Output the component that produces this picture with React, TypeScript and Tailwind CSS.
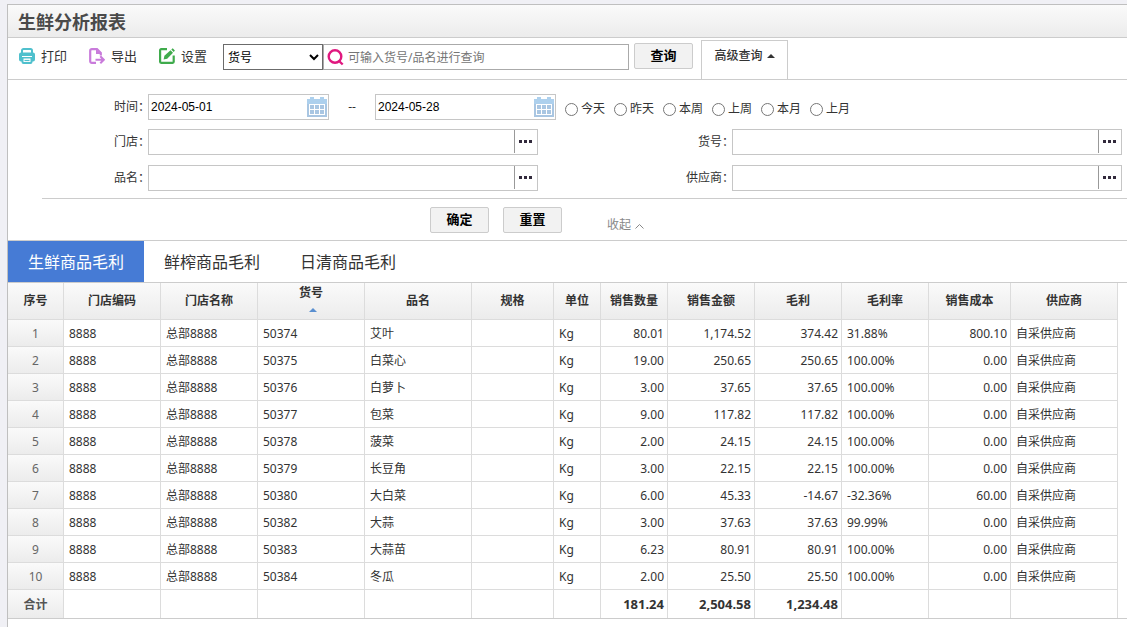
import React from "react";

type Row = {
  code: string;
  name: string;
  qty: string;
  amount: string;
  profit: string;
  rate: string;
  cost: string;
};

const rows: Row[] = [
  { code: "50374", name: "艾叶", qty: "80.01", amount: "1,174.52", profit: "374.42", rate: "31.88%", cost: "800.10" },
  { code: "50375", name: "白菜心", qty: "19.00", amount: "250.65", profit: "250.65", rate: "100.00%", cost: "0.00" },
  { code: "50376", name: "白萝卜", qty: "3.00", amount: "37.65", profit: "37.65", rate: "100.00%", cost: "0.00" },
  { code: "50377", name: "包菜", qty: "9.00", amount: "117.82", profit: "117.82", rate: "100.00%", cost: "0.00" },
  { code: "50378", name: "菠菜", qty: "2.00", amount: "24.15", profit: "24.15", rate: "100.00%", cost: "0.00" },
  { code: "50379", name: "长豆角", qty: "3.00", amount: "22.15", profit: "22.15", rate: "100.00%", cost: "0.00" },
  { code: "50380", name: "大白菜", qty: "6.00", amount: "45.33", profit: "-14.67", rate: "-32.36%", cost: "60.00" },
  { code: "50382", name: "大蒜", qty: "3.00", amount: "37.63", profit: "37.63", rate: "99.99%", cost: "0.00" },
  { code: "50383", name: "大蒜苗", qty: "6.23", amount: "80.91", profit: "80.91", rate: "100.00%", cost: "0.00" },
  { code: "50384", name: "冬瓜", qty: "2.00", amount: "25.50", profit: "25.50", rate: "100.00%", cost: "0.00" },
];

const columns = [
  { title: "序号", width: "w-[56px]" },
  { title: "门店编码", width: "w-[97px]" },
  { title: "门店名称", width: "w-[97px]" },
  { title: "货号", width: "w-[107px]", sorted: true },
  { title: "品名", width: "w-[107px]" },
  { title: "规格", width: "w-[82px]" },
  { title: "单位", width: "w-[47px]" },
  { title: "销售数量", width: "w-[67px]" },
  { title: "销售金额", width: "w-[87px]" },
  { title: "毛利", width: "w-[87px]" },
  { title: "毛利率", width: "w-[87px]" },
  { title: "销售成本", width: "w-[82px]" },
  { title: "供应商", width: "w-[107px]" },
];

const ranges = ["今天", "昨天", "本周", "上周", "本月", "上月"];

function PrintIcon() {
  return (
    <svg className="size-4" viewBox="0 0 16 16" fill="none" aria-hidden="true">
      <path d="M3 5V2.500A1.500 1.500 0 0 1 4.500 1h7A1.500 1.500 0 0 1 13 2.500V5" stroke="#4fc0cd" strokeWidth="2" />
      <path d="M2 4.500h12a2 2 0 0 1 2 2v5a2 2 0 0 1-2 2H2a2 2 0 0 1-2-2v-5a2 2 0 0 1 2-2z" fill="#4fc0cd" />
      <path d="M3.500 9.500h9V14a1 1 0 0 1-1 1h-7a1 1 0 0 1-1-1z" fill="#fff" stroke="#4fc0cd" strokeWidth="2" />
      <path d="M3 8.500h10" stroke="#fff" strokeWidth="1" />
      <path d="M5.500 12.500h5" stroke="#4fc0cd" strokeWidth="1.200" />
    </svg>
  );
}

function ExportIcon() {
  return (
    <svg className="size-4" viewBox="0 0 16 16" fill="none" stroke="#c97bdb" strokeWidth="2.200" aria-hidden="true">
      <path d="M7 14.900H2.800A1.600 1.600 0 0 1 1.200 13.300V2.700A1.600 1.600 0 0 1 2.800 1.100H8L11.800 5v2.500" />
      <path d="M7 1v5h5z" fill="#c97bdb" stroke="none" />
      <path d="M6.500 11.800h8M11.300 8.300l3.500 3.500-3.500 3.500" strokeWidth="2" />
    </svg>
  );
}

function EditIcon() {
  return (
    <svg className="size-4" viewBox="0 0 16 16" fill="none" stroke="#3fab4c" strokeWidth="2.200" aria-hidden="true">
      <path d="M8 1.200H2.100a1 1 0 0 0-1 1v11.600a1 1 0 0 0 1 1h11.600a1 1 0 0 0 1-1V7.500" />
      <path d="M4.600 11.500l.8-3.700L11.500 2.200l2.500 2.500L8.200 10.700z" fill="#3fab4c" stroke="none" />
      <path d="M12.300 1.500L13.700.3 15.900 2.500l-1.200 1.400z" fill="#3fab4c" stroke="none" />
    </svg>
  );
}

function CalendarIcon() {
  return (
    <svg className="h-5 w-5" viewBox="0 0 20 20" aria-hidden="true">
      <path d="M0 2h3V0h4v2h6V0h4v2h3v18H0z" fill="#add0ed" />
      <path d="M0 7h20v13H0z" fill="#a9c6e2" />
      <path d="M2 7h16v11H2z" fill="#fff" />
      <path
        d="M3 8h4v4H3zM8 8h4v4H8zM13 8h4v4h-4zM3 13h4v4H3zM8 13h4v4H8zM13 13h4v4h-4z"
        fill="#a9c6e2"
      />
    </svg>
  );
}

function ToolButton({ icon, children }: { icon: React.ReactNode; children: React.ReactNode }) {
  return (
    <button type="button" className="flex items-center gap-1.5 text-[13px] leading-5">
      {icon}
      {children}
    </button>
  );
}

function PushButton({ children }: { children: React.ReactNode }) {
  return (
    <button
      type="button"
      className="h-[26px] w-[59px] rounded-[2px] border border-[#ccc] bg-[#f2f2f2] pb-0.5 text-[13px] leading-5 font-bold text-black"
    >
      {children}
    </button>
  );
}

function FieldLabel({ htmlFor, children }: { htmlFor: string; children: React.ReactNode }) {
  return (
    <label htmlFor={htmlFor} className="-mr-0.5 text-right leading-[25px]">
      {children}
    </label>
  );
}

function DateInput({ id, label, value }: { id: string; label: string; value: string }) {
  return (
    <div className="flex h-[26px] w-[181px] items-center border border-[#c6c6c6] pr-px">
      <input
        id={id}
        aria-label={label}
        defaultValue={value}
        className="h-full min-w-0 flex-1 px-0.5 font-['Liberation_Sans',sans-serif] text-black outline-none"
      />
      <button type="button" aria-label={label}>
        <CalendarIcon />
      </button>
    </div>
  );
}

function PickerInput({ id }: { id: string }) {
  return (
    <div className="flex h-[26px] border border-[#c6c6c6]">
      <input id={id} className="min-w-0 flex-1 px-1 outline-none" />
      <button
        type="button"
        aria-label="选择"
        className="mb-px flex w-[23px] items-center justify-center gap-[2px] border-l border-[#999] pr-px"
      >
        <span className="size-[3px] bg-[#322a3c]" />
        <span className="size-[3px] bg-[#322a3c]" />
        <span className="size-[3px] bg-[#322a3c]" />
      </button>
    </div>
  );
}

export default function App() {
  const cell = "border-r border-b border-[#dcdcdc] pt-0.5 pl-[5px] pr-[3px]";
  const shade = "bg-linear-to-b from-[#fafafa] to-[#ececec]";

  return (
    <div className="min-h-screen overflow-hidden bg-[#f0f0f5] pt-1 pl-[7px] font-['Noto_Sans','Noto_Sans_CJK_SC',sans-serif] text-xs text-[#333]">
      <main className="min-h-[calc(100vh-4px)] border-t border-l border-[#bfbfbf] bg-white">
        <h1 className={`${shade} h-[33px] border-b border-[#ccc] pl-[10px] text-lg leading-[34px] font-bold text-[#4a4a4a]`}>
          生鲜分析报表
        </h1>

        <div className="flex h-[42px] items-start border-b border-[#ccc] pl-[11px]">
          <div className="flex gap-[22px] pt-2">
            <ToolButton icon={<PrintIcon />}>打印</ToolButton>
            <ToolButton icon={<ExportIcon />}>导出</ToolButton>
            <ToolButton icon={<EditIcon />}>设置</ToolButton>
          </div>
          <select
            aria-label="查询字段"
            className="mt-1.5 ml-4 h-[26px] w-[100px] border border-[#6b6b6b] bg-white text-black"
          >
            <option>货号</option>
            <option>品名</option>
          </select>
          <div className="mt-1.5 flex h-[26px] w-[306px] items-center gap-1 border border-[#aaa] pl-[3px]">
            <svg className="size-[17px]" viewBox="0 0 17 17" fill="none" stroke="#e0187f" strokeWidth="2.400" aria-hidden="true">
              <circle cx="8" cy="7.500" r="6.300" />
              <path d="M11.500 11.500l4.200 4" />
            </svg>
            <input
              aria-label="查询"
              placeholder="可输入货号/品名进行查询"
              className="h-full min-w-0 flex-1 outline-none placeholder:text-[#757575]"
            />
          </div>
          <div className="mt-[5px] ml-[5px]">
            <PushButton>查询</PushButton>
          </div>
          <button
            type="button"
            className="mt-0.5 ml-2 flex h-[39px] w-[87px] items-start justify-center gap-1 border-x border-t border-[#ccc] pt-[5px] leading-5 font-medium"
          >
            高级查询
            <svg className="mt-2 h-1 w-2" viewBox="0 0 8 4" aria-hidden="true">
              <path d="M0 4l4-4 4 4z" fill="#333" />
            </svg>
          </button>
        </div>

        <form onSubmit={(e) => e.preventDefault()}>
          <div className="grid grid-cols-[140px_1fr_194px_1fr] gap-y-[10px] pt-[14px] pr-[5px] pb-[7px]">
            <FieldLabel htmlFor="from">时间：</FieldLabel>
            <div className="col-span-3 flex h-[25px]">
              <DateInput id="from" label="开始日期" value="2024-05-01" />
              <span className="w-[46px] text-center leading-[26px]">--</span>
              <DateInput id="to" label="结束日期" value="2024-05-28" />
              <div className="ml-[9px] flex gap-[9px] pt-1">
                {ranges.map((range) => (
                  <label key={range} className="flex items-center gap-[3px] leading-5">
                    <input type="radio" name="range" className="mt-0.5 size-[13px]" />
                    {range}
                  </label>
                ))}
              </div>
            </div>
            <FieldLabel htmlFor="store">门店：</FieldLabel>
            <PickerInput id="store" />
            <FieldLabel htmlFor="code">货号：</FieldLabel>
            <PickerInput id="code" />
            <FieldLabel htmlFor="name">品名：</FieldLabel>
            <PickerInput id="name" />
            <FieldLabel htmlFor="supplier">供应商：</FieldLabel>
            <PickerInput id="supplier" />
          </div>
          <hr className="ml-[34px] border-[#ccc]" />
          <div className="flex h-[42px] items-start gap-[14px] border-b border-[#ccc] pt-2 pl-[422px]">
            <PushButton>确定</PushButton>
            <PushButton>重置</PushButton>
            <button type="button" className="mt-2 ml-[31px] flex items-center gap-1 leading-5 text-[#888]">
              收起
              <svg className="mt-0.5 h-[5px] w-[9px]" viewBox="0 0 9 5" fill="none" stroke="#888" aria-hidden="true">
                <path d="M.5 4.500l4-4 4 4" />
              </svg>
            </button>
          </div>
        </form>

        <nav className="flex h-[42px] border-b border-[#ccc] text-base">
          <button type="button" className="w-[136px] bg-[#467bd5] text-white">
            生鲜商品毛利
          </button>
          <button type="button" className="w-[136px]">
            鲜榨商品毛利
          </button>
          <button type="button" className="w-[136px]">
            日清商品毛利
          </button>
        </nav>

        <div className="overflow-hidden border-b border-[#ccc]">
          <table className="w-[1110px] table-fixed border-separate border-spacing-0 leading-5">
            <thead>
              <tr className="h-[37px]">
                {columns.map((column) => (
                  <th
                    key={column.title}
                    scope="col"
                    className={`${column.width} ${shade} border-r border-b border-[#dcdcdc] p-0 text-center font-bold`}
                  >
                    {column.sorted ? (
                      <div className="flex flex-col items-center gap-[5px] pb-[7px]">
                        <span>{column.title}</span>
                        <svg className="ml-1 h-1 w-2" viewBox="0 0 8 4" aria-hidden="true">
                          <path d="M0 4l4-4 4 4z" fill="#5a8fd0" />
                        </svg>
                      </div>
                    ) : (
                      column.title
                    )}
                  </th>
                ))}
              </tr>
            </thead>
            <tbody>
              {rows.map((row, i) => (
                <tr key={row.code} className="h-[27px]">
                  <th
                    scope="row"
                    className={`${shade} border-r border-b border-[#dcdcdc] px-0 pt-0.5 pb-0 text-center font-normal text-[#666]`}
                  >
                    {i + 1}
                  </th>
                  <td className={cell}>8888</td>
                  <td className={cell}>总部8888</td>
                  <td className={cell}>{row.code}</td>
                  <td className={cell}>{row.name}</td>
                  <td className={cell}></td>
                  <td className={cell}>Kg</td>
                  <td className={`${cell} text-right`}>{row.qty}</td>
                  <td className={`${cell} text-right`}>{row.amount}</td>
                  <td className={`${cell} text-right`}>{row.profit}</td>
                  <td className={cell}>{row.rate}</td>
                  <td className={`${cell} text-right`}>{row.cost}</td>
                  <td className={cell}>自采供应商</td>
                </tr>
              ))}
            </tbody>
            <tfoot>
              <tr className="h-7 font-bold">
                <th scope="row" className={`${shade} border-r border-[#dcdcdc] px-0 pt-0.5 pb-0 text-center text-[#555]`}>
                  合计
                </th>
                {["", "", "", "", "", "", "181.24", "2,504.58", "1,234.48", "", "", ""].map((total, i) => (
                  <td key={i} className="border-r border-[#dcdcdc] pr-[3px] text-right text-[13px]">
                    {total}
                  </td>
                ))}
              </tr>
            </tfoot>
          </table>
        </div>
      </main>
    </div>
  );
}
